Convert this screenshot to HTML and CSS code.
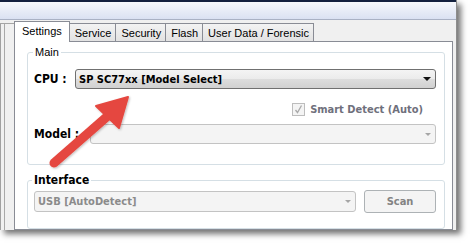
FILE: index.html
```html
<!DOCTYPE html>
<html lang="en">
<head>
  <meta charset="UTF-8">
  <meta name="viewport" content="width=device-width, initial-scale=1.0">
  <title>Settings</title>
  <link rel="stylesheet" href="styles.css">
</head>
<body>
  <div class="screen">
    <div class="window">
      <div class="titlebar"></div>
      <div class="frame">
        <div class="sidebar"><div class="side-edge"></div></div>
        <div class="tabs-area">
          <div class="tabs">
            <div class="tab active">Settings</div>
            <div class="tab">Service</div>
            <div class="tab">Security</div>
            <div class="tab">Flash</div>
            <div class="tab">User Data / Forensic</div>
          </div>
          <div class="panel">
            <!-- Main -->
            <div class="group main">
              <div class="group-title">Main</div>
              <div class="row cpu-row">
                <span class="label">CPU :</span>
                <div class="combo">
                  <span>SP SC77xx [Model Select]</span>
                  <span class="caret"></span>
                </div>
              </div>
              <div class="row smart-row">
                <span class="check">
                  <svg width="11" height="11" viewBox="0 0 11 11"><path d="M2.5 6 L4.5 8.5 L8.5 1.5" fill="none" stroke="#a9a9a9" stroke-width="1.3"/></svg>
                </span>
                <span>Smart Detect (Auto)</span>
              </div>
              <div class="row model-row">
                <span class="label model-label">Model :</span>
                <div class="combo disabled">
                  <span></span>
                  <span class="caret"></span>
                </div>
              </div>
            </div>

            <!-- Interface -->
            <div class="group iface">
              <div class="group-title bold">Interface</div>
              <div class="row iface-row">
                <div class="combo disabled usb">
                  <span>USB [AutoDetect]</span>
                  <span class="caret"></span>
                </div>
                <div class="button">Scan</div>
              </div>
            </div>
          </div>
        </div>
      </div>
    </div>

    <svg class="arrow" width="473" height="245" viewBox="0 0 473 245">
      <defs>
        <filter id="soft" x="-20%" y="-20%" width="140%" height="140%">
          <feDropShadow dx="1" dy="1" stdDeviation="1" flood-color="#000" flood-opacity="0.25"/>
        </filter>
      </defs>
      <g filter="url(#soft)" fill="#e5473f" stroke="#e5473f">
        <line x1="54" y1="163" x2="110" y2="114" stroke-width="9" stroke-linecap="round"/>
        <polygon points="128,97 96,106 119,128" stroke-width="2" stroke-linejoin="round"/>
      </g>
    </svg>
  </div>
</body>
</html>
```

FILE: styles.css
```css
body {
  margin: 0;
  background: #fff;
  font-family: "DejaVu Sans Condensed", "DejaVu Sans", sans-serif;
  font-size: 11px;
  color: #000;
}

.screen {
  position: relative;
  width: 473px;
  height: 245px;
}

.window {
  width: 457px;
  height: 230px;
  box-sizing: border-box;
  display: flex;
  flex-direction: column;
  background: #f0f0f0;
  border-right: 1px solid #8d8d8d;
  box-shadow: 4px 4px 6px rgba(0, 0, 0, 0.55);
}

.titlebar {
  height: 17px;
  border-top: 2px solid #13203f;
  border-bottom: 1px solid #a9b1c4;
  background: linear-gradient(#f6f8fc, #dae1f2);
}

.frame {
  flex: 1;
  display: flex;
  padding-right: 3px;
}

.sidebar {
  width: 16px;
  padding-top: 3px;
  display: flex;
}

.side-edge {
  flex: 1;
  border-top: 1px solid #a5a5a5;
  background: linear-gradient(to right, #a0a0a0 0 1px, #f0f0f0 1px 4px, #a8a8a8 4px 5px, #f0f0f0 5px);
}

.tabs-area {
  flex: 1;
  display: flex;
  flex-direction: column;
}

.tabs {
  height: 21px;
  display: flex;
  align-items: flex-end;
  font-family: "Liberation Sans", Arial, sans-serif;
  font-size: 11px;
}

.tab {
  height: 18px;
  box-sizing: border-box;
  display: flex;
  align-items: center;
  padding: 0 4px 0 5px;
  margin-right: -1px;
  border: 1px solid #898c95;
  border-bottom: none;
  background: linear-gradient(#f3f3f3, #e2e2e2);
}

.tab.active {
  position: relative;
  z-index: 1;
  height: 21px;
  margin-bottom: -1px;
  padding: 0 7px 2px 7px;
  background: #fff;
}

.panel {
  flex: 1;
  background: #fff;
  border: 1px solid #898c95;
  padding: 10px 7px 0 12px;
}

.group {
  box-sizing: border-box;
  border: 1px solid #d5dfe5;
  border-radius: 3px;
  padding: 0 8px 0 6px;
}

.group.main {
  height: 113px;
}

.group.iface {
  height: 49px;
  margin-top: 15px;
}

.group-title {
  width: fit-content;
  margin: -8px 0 0 -1px;
  padding: 0 2px;
  background: #fff;
  line-height: 14px;
  font-family: "Liberation Sans", Arial, sans-serif;
  font-size: 11px;
}

.group-title.bold {
  margin-left: -2px;
  font-family: "DejaVu Sans Condensed", "DejaVu Sans", sans-serif;
  font-size: 12px;
  font-weight: bold;
}

.row {
  display: flex;
  align-items: center;
}

.label {
  width: 41px;
  font-size: 12px;
  font-weight: bold;
}

.model-label {
  width: 56px;
}

.cpu-row {
  height: 20px;
  margin-top: 10px;
}

.smart-row {
  height: 13px;
  margin-top: 14px;
  justify-content: flex-end;
  padding-right: 13px;
  font-weight: bold;
  color: #6f707c;
}

.check {
  width: 13px;
  height: 13px;
  box-sizing: border-box;
  margin-right: 5px;
  border: 1px solid #bdbdbd;
  background: #f4f4f4;
  display: flex;
  align-items: center;
  justify-content: center;
}

.model-row {
  height: 20px;
  margin-top: 8px;
}

.combo {
  flex: 1;
  height: 20px;
  box-sizing: border-box;
  display: flex;
  align-items: center;
  justify-content: space-between;
  padding: 0 4px 0 3px;
  border: 1px solid #707070;
  border-radius: 3px;
  background: linear-gradient(#f4f4f4, #ebebeb 50%, #dddddd 51%, #d1d1d1);
  font-weight: bold;
}

.caret {
  width: 0;
  height: 0;
  border-left: 4px solid transparent;
  border-right: 4px solid transparent;
  border-top: 4px solid #111;
}

.combo.disabled {
  border-color: #c3c3c3;
  background: #f4f4f4;
  color: #8b8b8b;
}

.combo.disabled .caret {
  border-left-width: 3px;
  border-right-width: 3px;
  border-top: 3px solid #a5a5a5;
}

.iface-row {
  height: 23px;
  margin-top: 3px;
  gap: 8px;
}

.combo.usb {
  flex: none;
  width: 322px;
  height: 21px;
}

.button {
  width: 72px;
  height: 23px;
  box-sizing: border-box;
  display: flex;
  align-items: center;
  justify-content: center;
  border: 1px solid #adb2b5;
  border-radius: 3px;
  background: #f4f4f4;
  color: #838383;
  font-weight: bold;
}

.arrow {
  position: absolute;
  left: 0;
  top: 0;
  pointer-events: none;
}
```
